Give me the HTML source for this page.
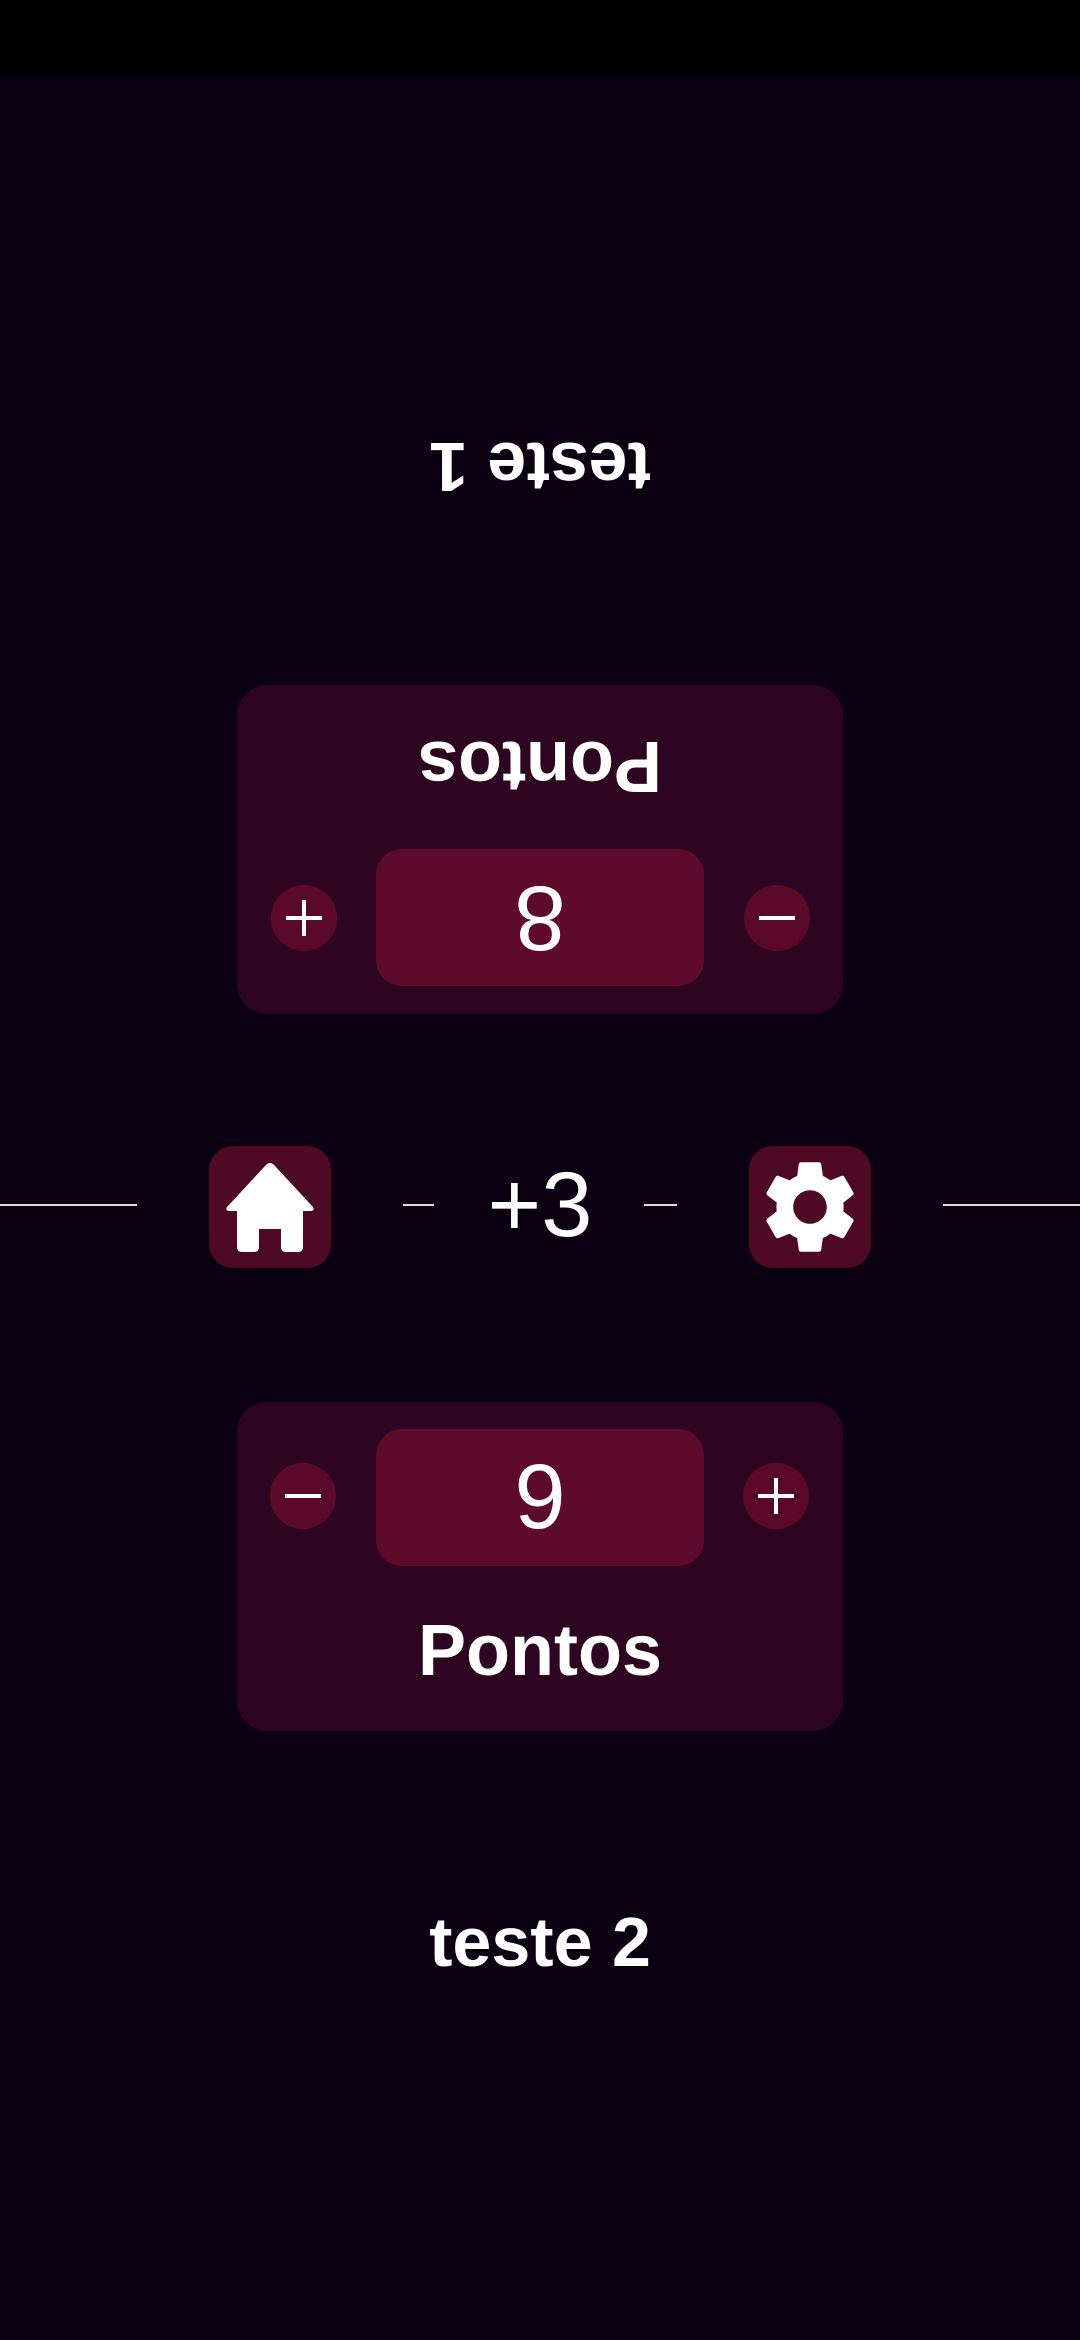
<!DOCTYPE html>
<html><head><meta charset="utf-8"><style>
*{margin:0;padding:0;box-sizing:border-box}
body{width:1080px;height:2340px;background:#0b0012;position:relative;overflow:hidden;font-family:"Liberation Sans",sans-serif;color:#fff}
.abs{position:absolute}
.bar{left:0;top:0;width:1080px;height:75px;background:#000}
.card{left:237px;width:606px;height:329px;background:#2e0520;border-radius:30px}
.val{left:139px;width:328px;height:137px;background:#5e0a2b;border-radius:26px;display:flex;align-items:center;justify-content:center;font-size:92px;font-weight:300}
.circ{width:66px;height:66px;border-radius:50%;background:#5a0a28;display:flex;align-items:center;justify-content:center}
.lbl{left:0;width:606px;text-align:center;font-size:72px;font-weight:bold;line-height:1}
.line{height:2px;background:#ddd;top:1204px}
.btn{top:1146px;width:122px;height:122px;background:#4e0a22;border-radius:24px;display:flex;align-items:center;justify-content:center}
</style></head><body>
<div class="abs bar"></div>

<div class="abs" style="left:0;width:1080px;top:432px;text-align:center;font-size:70px;font-weight:bold;line-height:70px;transform:rotate(180deg)">teste 1</div>

<div class="abs card" style="top:685px;transform:rotate(180deg)">
  <div class="abs lbl" style="top:212px">Pontos</div>
  <div class="abs val" style="top:28px">8</div>
  <div class="abs circ" style="left:33px;top:63px"><svg width="40" height="40"><rect x="2" y="18" width="36" height="4" fill="#fff"/></svg></div>
  <div class="abs circ" style="left:506px;top:63px"><svg width="40" height="40"><rect x="2" y="18" width="36" height="4" fill="#fff"/><rect x="18" y="2" width="4" height="36" fill="#fff"/></svg></div>
</div>

<div class="abs line" style="left:0;width:137px"></div>
<div class="abs line" style="left:403px;width:31px"></div>
<div class="abs line" style="left:644px;width:33px"></div>
<div class="abs line" style="left:943px;width:137px"></div>
<div class="abs" style="left:440px;width:200px;top:1153px;text-align:center;font-size:92px;font-weight:300;line-height:104px">+3</div>

<div class="abs btn" style="left:209px">
<svg width="100" height="100" viewBox="0 0 100 100"><path d="M50 12 Q52 12 54 14 L93 56 Q95 60 90 60 L83 60 L83 96 Q83 101 78 101 L66 101 Q61 101 61 96 L61 78 L39 78 L39 96 Q39 101 34 101 L22 101 Q17 101 17 96 L17 60 L10 60 Q5 60 7 56 L46 14 Q48 12 50 12 Z" fill="#fff" transform="translate(0,-6)"/></svg>
</div>
<div class="abs btn" style="left:749px">
<svg width="112" height="112" viewBox="0 0 24 24"><path fill="#fff" d="M19.14 12.94c.04-.3.06-.61.06-.94 0-.32-.02-.64-.07-.94l2.03-1.58a.49.49 0 0 0 .12-.61l-1.92-3.32a.488.488 0 0 0-.59-.22l-2.390.96c-.5-.38-1.03-.7-1.620-.94l-.36-2.54a.484.484 0 0 0-.48-.41h-3.84c-.24 0-.43.17-.47.41l-.36 2.54c-.59.24-1.13.57-1.62.94l-2.39-.96c-.22-.08-.47 0-.59.22L2.74 8.87c-.12.21-.08.47.12.61l2.03 1.58c-.05.3-.09.63-.09.94s.02.64.07.94l-2.03 1.58a.49.49 0 0 0-.12.61l1.92 3.32c.12.22.37.29.59.22l2.39-.96c.5.38 1.03.7 1.62.94l.36 2.54c.05.24.24.41.48.41h3.84c.24 0 .44-.17.47-.41l.36-2.54c.59-.24 1.13-.56 1.62-.94l2.39.96c.22.08.47 0 .59-.22l1.92-3.32c.12-.22.07-.47-.12-.61l-2.01-1.58zM12 15.6c-1.98 0-3.6-1.62-3.6-3.6s1.62-3.6 3.6-3.6 3.6 1.62 3.6 3.6-1.62 3.6-3.6 3.6z"/></svg>
</div>

<div class="abs card" style="top:1402px">
  <div class="abs lbl" style="top:213px">Pontos</div>
  <div class="abs val" style="top:27px">9</div>
  <div class="abs circ" style="left:33px;top:61px"><svg width="40" height="40"><rect x="2" y="18" width="36" height="4" fill="#fff"/></svg></div>
  <div class="abs circ" style="left:506px;top:61px"><svg width="40" height="40"><rect x="2" y="18" width="36" height="4" fill="#fff"/><rect x="18" y="2" width="4" height="36" fill="#fff"/></svg></div>
</div>

<div class="abs" style="left:0;width:1080px;top:1907px;text-align:center;font-size:70px;font-weight:bold;line-height:70px">teste 2</div>
</body></html>
